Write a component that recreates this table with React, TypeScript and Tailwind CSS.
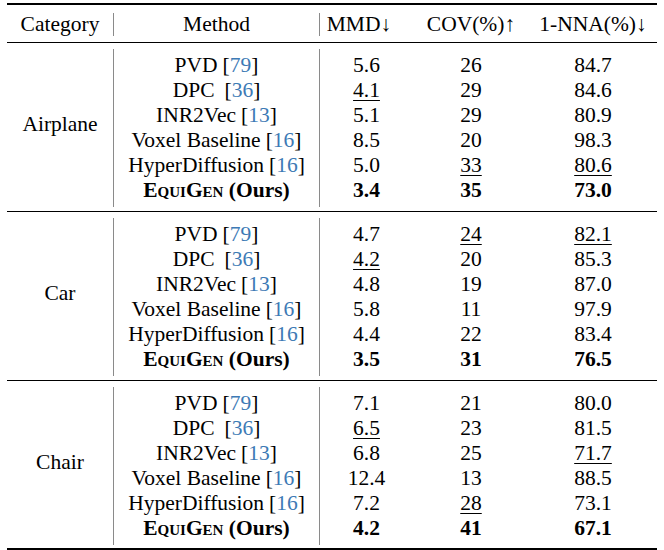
type Cell = { v: string; b?: boolean; u?: boolean };
type Row = { method: string; cite?: string; ours?: boolean; wide?: boolean; cells: Cell[] };
type Section = { category: string; rows: Row[] };

const c = (v: string, flag?: "u" | "b"): Cell => ({ v, u: flag === "u", b: flag === "b" });

const DOWN = "\u2193";
const UP = "\u2191";

const sections: Section[] = [
  {
    category: "Airplane",
    rows: [
      { method: "PVD", cite: "79", cells: [c("5.6"), c("26"), c("84.7")] },
      { method: "DPC", cite: "36", wide: true, cells: [c("4.1", "u"), c("29"), c("84.6")] },
      { method: "INR2Vec", cite: "13", cells: [c("5.1"), c("29"), c("80.9")] },
      { method: "Voxel Baseline", cite: "16", cells: [c("8.5"), c("20"), c("98.3")] },
      { method: "HyperDiffusion", cite: "16", cells: [c("5.0"), c("33", "u"), c("80.6", "u")] },
      { method: "", ours: true, cells: [c("3.4", "b"), c("35", "b"), c("73.0", "b")] },
    ],
  },
  {
    category: "Car",
    rows: [
      { method: "PVD", cite: "79", cells: [c("4.7"), c("24", "u"), c("82.1", "u")] },
      { method: "DPC", cite: "36", wide: true, cells: [c("4.2", "u"), c("20"), c("85.3")] },
      { method: "INR2Vec", cite: "13", cells: [c("4.8"), c("19"), c("87.0")] },
      { method: "Voxel Baseline", cite: "16", cells: [c("5.8"), c("11"), c("97.9")] },
      { method: "HyperDiffusion", cite: "16", cells: [c("4.4"), c("22"), c("83.4")] },
      { method: "", ours: true, cells: [c("3.5", "b"), c("31", "b"), c("76.5", "b")] },
    ],
  },
  {
    category: "Chair",
    rows: [
      { method: "PVD", cite: "79", cells: [c("7.1"), c("21"), c("80.0")] },
      { method: "DPC", cite: "36", wide: true, cells: [c("6.5", "u"), c("23"), c("81.5")] },
      { method: "INR2Vec", cite: "13", cells: [c("6.8"), c("25"), c("71.7", "u")] },
      { method: "Voxel Baseline", cite: "16", cells: [c("12.4"), c("13"), c("88.5")] },
      { method: "HyperDiffusion", cite: "16", cells: [c("7.2"), c("28", "u"), c("73.1")] },
      { method: "", ours: true, cells: [c("4.2", "b"), c("41", "b"), c("67.1", "b")] },
    ],
  },
];

const cols = "grid grid-cols-[107px_206px_93px_116px_128px]";

function MethodName({ row }: { row: Row }) {
  if (row.ours) {
    return (
      <span className="font-bold">
        <span className="[font-variant-caps:small-caps]">EquiGen</span> (Ours)
      </span>
    );
  }
  return (
    <span>
      {row.method}
      <span className={row.wide ? "ml-[10px]" : "ml-[5px]"}>
        [<span className="text-[#3d7ab5]">{row.cite}</span>]
      </span>
    </span>
  );
}

function Value({ cell }: { cell: Cell }) {
  return (
    <div className="flex h-[25px] items-center justify-center">
      <span
        className={`${cell.b ? "font-bold" : ""} ${
          cell.u ? "underline decoration-1 underline-offset-[3px]" : ""
        }`}
      >
        {cell.v}
      </span>
    </div>
  );
}

function DataSection({ section, last }: { section: Section; last?: boolean }) {
  return (
    <div className={`pt-[6px] ${last ? "pb-[3px]" : "pb-[4px]"}`}>
      <div className={cols}>
        <div className="flex items-center justify-center border-r border-[#8a8a8a] pb-[8px]">
          {section.category}
        </div>
        <div className="border-r border-[#8a8a8a] py-1">
          {section.rows.map((r, i) => (
            <div key={i} className="flex h-[25px] items-center justify-center whitespace-nowrap">
              <MethodName row={r} />
            </div>
          ))}
        </div>
        {[0, 1, 2].map((k) => (
          <div key={k} className="py-1">
            {section.rows.map((r, i) => (
              <Value key={i} cell={r.cells[k]} />
            ))}
          </div>
        ))}
      </div>
    </div>
  );
}

export default function App() {
  return (
    <div className="h-[550px] w-[664px] overflow-hidden bg-white pt-[3px] font-['Liberation_Serif',serif] text-[21.5px] text-black">
      <div className="ml-[7px] w-[650px]">
        <div className="h-[2px] bg-black" />
        <div className="pt-[8px] pb-[6px]">
          <div className={`${cols} h-[23px] leading-[23px]`}>
            <div className="border-r border-[#8a8a8a] text-center">Category</div>
            <div className="border-r border-[#8a8a8a] text-center">Method</div>
            <div className="pr-[15px] text-center">MMD{DOWN}</div>
            <div className="text-center">COV(%){UP}</div>
            <div className="text-center">1-NNA(%){DOWN}</div>
          </div>
        </div>
        <div className="h-px bg-black" />
        <DataSection section={sections[0]} />
        <div className="h-px bg-black" />
        <DataSection section={sections[1]} />
        <div className="h-px bg-black" />
        <DataSection section={sections[2]} last />
        <div className="h-[2px] bg-black" />
      </div>
    </div>
  );
}
